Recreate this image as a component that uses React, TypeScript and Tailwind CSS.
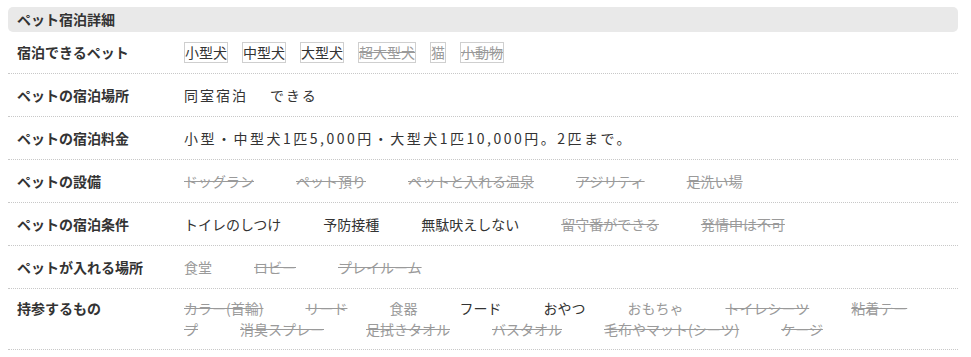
import React from 'react';

type Item = { text: string; ok?: boolean; off?: boolean };

const font = { fontFamily: '"Noto Sans CJK JP", "Noto Sans", sans-serif' };

const facilities: Item[] = [
  { text: 'ドッグラン', off: true },
  { text: 'ペット預り', off: true },
  { text: 'ペットと入れる温泉', off: true },
  { text: 'アジリティ', off: true },
  { text: '足洗い場', off: true },
];

const conditions: Item[] = [
  { text: 'トイレのしつけ', ok: true },
  { text: '予防接種', ok: true },
  { text: '無駄吠えしない', ok: true },
  { text: '留守番ができる', off: true },
  { text: '発情中は不可', off: true },
];

const places: Item[] = [
  { text: '食堂' },
  { text: 'ロビー', off: true },
  { text: 'プレイルーム', off: true },
];

const belongings: Item[] = [
  { text: 'カラー(首輪)', off: true },
  { text: 'リード', off: true },
  { text: '食器' },
  { text: 'フード', ok: true },
  { text: 'おやつ', ok: true },
  { text: 'おもちゃ' },
  { text: 'トイレシーツ', off: true },
  { text: '粘着テープ', off: true },
  { text: '消臭スプレー', off: true },
  { text: '足拭きタオル', off: true },
  { text: 'バスタオル', off: true },
  { text: '毛布やマット(シーツ)', off: true },
  { text: 'ケージ', off: true },
];

const pets: Item[] = [
  { text: '小型犬', ok: true },
  { text: '中型犬', ok: true },
  { text: '大型犬', ok: true },
  { text: '超大型犬', off: true },
  { text: '猫' },
  { text: '小動物', off: true },
];

function Words({ items }: { items: Item[] }) {
  return (
    <>
      {items.map((it) => (
        <span
          key={it.text}
          className={
            'mr-[42px] ' +
            (it.ok ? 'text-[#333]' : 'text-[#9a9a9a]') +
            (it.off ? ' line-through' : '')
          }
        >
          {it.text}
        </span>
      ))}
    </>
  );
}

function Row({
  label,
  children,
  pad = 'py-[11px]',
  lead = 'leading-5',
}: {
  label: string;
  children: React.ReactNode;
  pad?: string;
  lead?: string;
}) {
  return (
    <div className={'flex border-b border-dotted border-[#c8c8c8] pl-[9px] ' + pad}>
      <div className="w-[167px] shrink-0 self-start font-bold leading-5 text-[#333]">{label}</div>
      <div className={'w-[740px] ' + lead}>{children}</div>
    </div>
  );
}

export default function App() {
  return (
    <div className="h-[357px] w-[971px] bg-white pl-2 pt-[7px] text-[14px]" style={font}>
      <div className="w-[950px]">
        <div className="h-[25px] rounded-[5px] bg-[#e9e9e9] pl-[9px] font-bold leading-[25px] text-[#333]">
          ペット宿泊詳細
        </div>
        <Row label="宿泊できるペット" pad="py-[10px]">
          <div className="flex gap-[14px]">
            {pets.map((p) => (
              <span
                key={p.text}
                className={
                  'border border-[#cfcfcf] leading-[19px] ' +
                  (p.ok ? 'text-[#333]' : 'text-[#9a9a9a]') +
                  (p.off ? ' line-through' : '')
                }
              >
                {p.text}
              </span>
            ))}
          </div>
        </Row>
        <Row label="ペットの宿泊場所">
          <span className="tracking-[2px] text-[#333]">
            <span className="mr-[22px]">同室宿泊</span>できる
          </span>
        </Row>
        <Row label="ペットの宿泊料金">
          <span className="tracking-[2.5px] text-[#333]">
            小型・中型犬1匹5,000円・大型犬1匹10,000円。2匹まで。
          </span>
        </Row>
        <Row label="ペットの設備">
          <Words items={facilities} />
        </Row>
        <Row label="ペットの宿泊条件">
          <Words items={conditions} />
        </Row>
        <Row label="ペットが入れる場所">
          <Words items={places} />
        </Row>
        <Row label="持参するもの" pad="py-[9px]" lead="leading-[21px]">
          <Words items={belongings} />
        </Row>
      </div>
    </div>
  );
}
